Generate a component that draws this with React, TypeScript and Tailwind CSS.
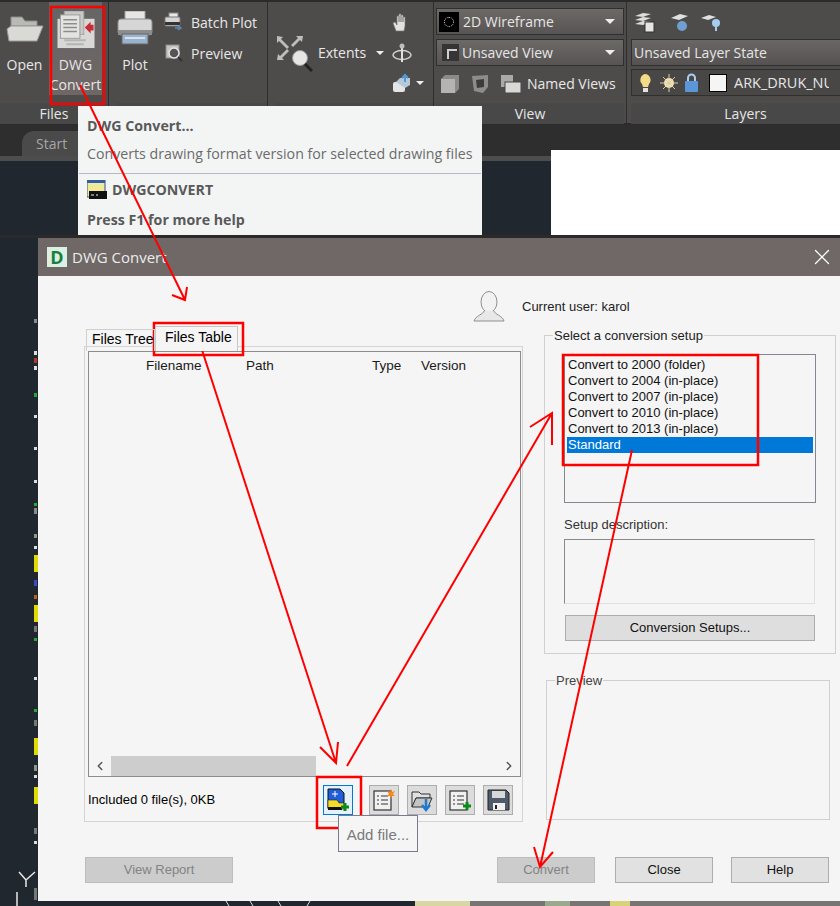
import React from "react";
import { X, ChevronLeft, ChevronRight } from "lucide-react";

const UI = "font-['Open_Sans',sans-serif]";
const WIN = "font-['Liberation_Sans',sans-serif]";

function Caret({ className = "" }: { className?: string }) {
  return <span className={"inline-block h-0 w-0 border-x-[4px] border-t-[4px] border-x-transparent border-t-[#eeeeee] " + className} />;
}

function FolderIcon() {
  return (
    <svg width="38" height="28" viewBox="0 0 38 28">
      <path d="M5 2h11l3 4h12v5H5z" fill="#b9b9b6" stroke="#8a8a88" />
      <path d="M5 11h32l-6 15H3L1 14z" fill="#d9d9d6" stroke="#9a9a98" />
    </svg>
  );
}

function ConvertIcon() {
  return (
    <svg width="42" height="40" viewBox="0 0 42 40">
      <rect x="2" y="8" width="38" height="30" fill="#d8d8d6" />
      <rect x="9" y="0" width="20" height="24" fill="#c9c9c7" stroke="#a3a3a1" />
      <rect x="5" y="4" width="20" height="24" fill="#e3e3e1" stroke="#9b9b99" />
      <path d="M8 9h14M8 13h14M8 17h14M8 21h14" stroke="#8d8d8b" strokeWidth="1.5" />
      <path d="M9 30h22M11 34h18" stroke="#b5b5b3" strokeWidth="2" />
      <path d="M30 17l6-6v3h3v6h-3v3z" fill="#cc2a38" />
    </svg>
  );
}

function PrinterIcon() {
  return (
    <svg width="36" height="34" viewBox="0 0 36 34">
      <rect x="8" y="0" width="20" height="9" fill="#e6e6e6" stroke="#a0a0a0" />
      <rect x="1" y="8" width="34" height="16" rx="3" fill="#d6d6d6" stroke="#8c8c8c" />
      <rect x="1" y="19" width="34" height="5" fill="#8d8d8d" />
      <rect x="5" y="23" width="26" height="10" fill="#9ab3cc" stroke="#666" />
      <path d="M8 27h20" stroke="#d5e2ee" strokeWidth="2" />
    </svg>
  );
}

function SmallPrinter() {
  return (
    <svg width="20" height="20" viewBox="0 0 20 20">
      <rect x="5" y="1" width="9" height="5" fill="#e8e8e8" stroke="#888" />
      <rect x="1" y="5" width="15" height="9" rx="1" fill="#d5d5d5" stroke="#777" />
      <rect x="1" y="10" width="15" height="3" fill="#333" />
      <path d="M11 16h6M14 14l3 2-3 2" stroke="#5b86b8" strokeWidth="1.5" fill="none" />
    </svg>
  );
}

function PreviewIcon() {
  return (
    <svg width="20" height="20" viewBox="0 0 20 20">
      <rect x="2" y="2" width="13" height="13" fill="#c5c5c5" stroke="#8c8c8c" />
      <circle cx="10" cy="10" r="5" fill="#555" stroke="#e5e5e5" strokeWidth="1.5" />
      <path d="M14 14l4 4" stroke="#333" strokeWidth="2" />
    </svg>
  );
}

function ExtentsIcon() {
  return (
    <svg width="38" height="38" viewBox="0 0 38 38">
      <path d="M2 2l6 1-2 2 8 8-2 2-8-8-2 2zM28 2l-1 6-2-2-7 7-2-2 7-7-2-2zM2 26l1-6 2 2 7-7 2 2-7 7 2 2z" fill="#bdbdbb" />
      <circle cx="25" cy="24" r="7.5" fill="#e6e6e6" stroke="#9a9a9a" />
      <path d="M30 30l7 7" stroke="#222" strokeWidth="3" />
    </svg>
  );
}

function HandIcon() {
  return (
    <svg width="18" height="20" viewBox="0 0 18 20">
      <path d="M4 18L1 10l2-1 2 3V3h2v6V1h2v8V2h2v7V4h2v9l-1 5z" fill="#e2e2e2" stroke="#777" strokeWidth=".7" />
    </svg>
  );
}

function OrbitIcon() {
  return (
    <svg width="20" height="20" viewBox="0 0 20 20">
      <ellipse cx="10" cy="12" rx="9" ry="4.5" fill="none" stroke="#d0d0d0" strokeWidth="1.5" />
      <path d="M10 1v18" stroke="#e0e0e0" strokeWidth="2" />
      <circle cx="10" cy="3" r="2.5" fill="#bdbdbd" />
    </svg>
  );
}

function CubeIcon() {
  return (
    <svg width="20" height="20" viewBox="0 0 20 20">
      <rect x="1" y="9" width="12" height="10" rx="2" fill="#e5e5e5" />
      <path d="M4 9l4-4h10v7l-5 3" fill="#b7c8d8" />
      <path d="M13 9V3M10 5l3-3 3 3" stroke="#4f9ad6" strokeWidth="2" fill="none" />
    </svg>
  );
}

function Combo({ children, caret = true }: { children: React.ReactNode; caret?: boolean }) {
  return (
    <div className="flex h-[27px] items-center border border-[#2f2f2f] bg-gradient-to-b from-[#6d6967] to-[#575453] pl-[2px] pr-[8px] text-[14px] text-[#e6e6e6]">
      {children}
      {caret && <Caret className="ml-auto border-x-[5px] border-t-[5px]" />}
    </div>
  );
}

function Panel({ width, label, children }: { width: string; label: string; children: React.ReactNode }) {
  return (
    <div className={"flex h-full shrink-0 flex-col border-r border-[#2e2e2e] " + width}>
      <div className="h-[101px] shrink-0">{children}</div>
      <div className="flex flex-1 items-center justify-center bg-[#484848] text-[14px] text-[#e6e6e6]">{label}</div>
    </div>
  );
}

function Ribbon() {
  return (
    <div className={"flex h-[125px] border-y-2 border-y-[#2b2b2b] bg-[#4e4c4b] text-[#e8e8e8] " + UI}>
      <Panel width="w-[109px]" label="Files">
        <div className="flex h-full">
          <div className="flex w-[49px] flex-col items-center pt-[13px] text-[14px]">
            <FolderIcon />
            <span className="mt-[11px]">Open</span>
          </div>
          <div className="flex h-[93px] w-[53px] flex-col items-center bg-gradient-to-b from-[#656565] to-[#6f6765] pt-[9px] text-[14px] leading-[20px]">
            <ConvertIcon />
            <span className="mt-[5px]">DWG</span>
            <span>Convert</span>
          </div>
        </div>
      </Panel>
      <Panel width="w-[159px] pl-[8px]" label="">
        <div className="flex h-full">
          <div className="flex w-[36px] flex-col items-center pt-[9px] text-[14px]">
            <PrinterIcon />
            <span className="mt-[9px]">Plot</span>
          </div>
          <div className="ml-[11px] flex flex-col gap-[11px] pt-[10px] text-[14px]">
            <div className="flex h-[20px] items-center gap-[7px]">
              <SmallPrinter />
              <span>Batch Plot</span>
            </div>
            <div className="flex h-[20px] items-center gap-[7px]">
              <PreviewIcon />
              <span>Preview</span>
            </div>
          </div>
        </div>
      </Panel>
      <Panel width="w-[166px] pl-[7px]" label="">
        <div className="flex h-full items-center">
          <ExtentsIcon />
          <span className="ml-[5px] text-[14px]">Extents</span>
          <Caret className="ml-[10px]" />
          <div className="ml-[8px] flex flex-col items-start gap-[10px]">
            <HandIcon />
            <OrbitIcon />
            <CubeIcon />
          </div>
          <Caret className="ml-[4px] mt-[60px]" />
        </div>
      </Panel>
      <Panel width="w-[193px] px-[2px]" label="View">
        <div className="flex flex-col gap-[4px] pt-[6px]">
          <Combo>
            <span className="relative mr-[4px] h-[20px] w-[20px] bg-black">
              <span className="absolute left-[5px] top-[5px] h-[10px] w-[10px] rounded-full border border-dotted border-[#dddddd]" />
            </span>
            2D Wireframe
          </Combo>
          <Combo>
            <span className="mr-[3px] ml-[3px] flex h-[17px] w-[17px] items-end justify-end bg-[#353535] p-[2px]">
              <span className="h-[10px] w-[10px] border-l-2 border-t-2 border-[#cfcfcf]" />
            </span>
            Unsaved View
          </Combo>
          <div className="flex h-[27px] items-center pl-[3px] text-[14px]">
            <svg width="82" height="22" viewBox="0 0 82 22">
              <path d="M2 6l4-4h14v14l-4 4H2z" fill="#8a8a88" />
              <rect x="2" y="6" width="14" height="14" fill="#b4b4b2" />
              <path d="M33 3l16-1v12l-5 6-9-2z" fill="#8c8c8a" />
              <path d="M37 7l8-1v8l-7 1z" fill="#3c3c3c" />
              <rect x="62" y="2" width="12" height="12" fill="#a9a9a7" />
              <rect x="66" y="9" width="16" height="11" fill="#d8d8d6" stroke="#444" />
            </svg>
            <span className="ml-[6px]">Named Views</span>
          </div>
        </div>
      </Panel>
      <Panel width="w-[234px] pl-[4px]" label="Layers">
        <div className="flex flex-col pt-[6px]">
          <div className="flex h-[27px] items-center gap-[17px] pl-[4px]">
            <svg width="90" height="22" viewBox="0 0 90 22">
              <path d="M0 5l8-3 8 1-8 3zM0 9l8-3 8 1-8 3zM0 13l8-3 8 1-8 3z" fill="#dddddd" />
              <rect x="10" y="11" width="9" height="10" fill="#e5e5e5" stroke="#333" />
              <path d="M36 7l9-4 8 2-9 4z" fill="#e0e0e0" />
              <circle cx="47" cy="15" r="5" fill="#6f9fd0" />
              <path d="M66 7l8-3 7 2-8 3z" fill="#e0e0e0" />
              <circle cx="81" cy="12" r="4" fill="#a5cdf0" />
              <path d="M81 16v4" stroke="#a5cdf0" strokeWidth="2" />
            </svg>
          </div>
          <div className="mt-[4px] flex h-[27px] items-center border border-[#2f2f2f] bg-gradient-to-b from-[#6a6665] to-[#555251] pl-[2px] text-[14px] text-[#e6e6e6]">
            Unsaved Layer State
          </div>
          <div className="mt-[3px] flex h-[27px] items-center overflow-hidden border border-[#2f2f2f] bg-[#484746] pl-[6px] text-[14.5px] text-[#e6e6e6]">
            <svg width="62" height="20" viewBox="0 0 62 20" className="shrink-0">
              <path d="M7 1a6 6 0 0 1 4 10l-1 3H5l-1-3A6 6 0 0 1 7 1z" fill="#f3dc85" />
              <rect x="5" y="15" width="5" height="4" fill="#e4e4e4" />
              <circle cx="31" cy="10" r="5" fill="#f4e6b5" />
              <path d="M31 1v18M22 10h18M25 4l12 12M37 4L25 16" stroke="#d8cfa8" strokeWidth="1" />
              <rect x="47" y="8" width="13" height="11" rx="1" fill="#5b97d8" />
              <path d="M50 8V5a3.500 3.500 0 0 1 7 0v3" fill="none" stroke="#a9cdf0" strokeWidth="2" />
            </svg>
            <span className="ml-[9px] h-[18px] w-[18px] shrink-0 border border-black bg-[#f5f5f5]" />
            <span className="ml-[7px] w-[95px] shrink-0 overflow-hidden whitespace-nowrap">ARK_DRUK_NU</span>
          </div>
        </div>
      </Panel>
    </div>
  );
}

function TabStrip() {
  return (
    <div className={"flex h-[36px] items-end border-b-[5px] border-b-[#4d4d4d] bg-[#2e2e2e] pl-[22px] " + UI}>
      <div className="flex h-[25px] w-[60px] items-center rounded-tl-[12px] bg-[#4a4a4a] pl-[14px] text-[14px] text-[#a6a6a6]">Start</div>
    </div>
  );
}

function CommandTooltip() {
  return (
    <div className={"absolute left-[78px] top-[106px] h-[129px] w-[404px] bg-[#f3f5f5] text-[#595959] " + UI}>
      <div className="px-[9px] pt-[10px] text-[14.200px] font-bold leading-[20px]">DWG Convert...</div>
      <div className="whitespace-nowrap px-[9px] pt-[8px] text-[14.200px] leading-[20px] text-[#6b6b6b]">Converts drawing format version for selected drawing files</div>
      <div className="mx-[1px] mt-[9px] border-t border-[#b5b9c2]" />
      <div className="flex items-center gap-[5px] px-[9px] pt-[6px] text-[14.200px] font-bold leading-[20px]">
        <svg width="20" height="20" viewBox="0 0 20 20">
          <rect x="0" y="0" width="18" height="17" fill="#f2e89a" stroke="#2f4f8f" />
          <rect x="0" y="0" width="18" height="3" fill="#2f5fa8" />
          <rect x="2" y="11" width="18" height="8" fill="#111" />
          <path d="M4 15h3M9 15h2" stroke="#eee" />
        </svg>
        DWGCONVERT
      </div>
      <div className="px-[9px] pt-[10px] text-[14.200px] font-bold leading-[20px]">Press F1 for more help</div>
    </div>
  );
}

function ToolButton({ active = false, children }: { active?: boolean; children: React.ReactNode }) {
  return (
    <div className={"flex h-[30px] w-[30px] items-center justify-center border " + (active ? "border-[#0078d7] bg-[#e5f1fb]" : "border-[#adadad] bg-[#dcdcdc]")}>
      {children}
    </div>
  );
}

function AddFileIcon() {
  return (
    <svg width="24" height="24" viewBox="0 0 24 24">
      <path d="M2 1h12l4 4v15H2z" fill="#1e5fd8" stroke="#111" />
      <path d="M2 12h9l2 3h5v6H2z" fill="#f5dc28" stroke="#222" strokeWidth=".6" />
      <path d="M9 3v6M6 6h6" stroke="#fff" />
      <rect x="2" y="19" width="14" height="3" fill="#111" />
      <path d="M19 15v8M15 19h8" stroke="#0a8a1a" strokeWidth="3" />
    </svg>
  );
}

function ListLines() {
  return (
    <>
      <rect x="2" y="3" width="17" height="19" fill="#f0f0f0" stroke="#333" strokeWidth="1.200" />
      <path d="M5 8h2M9 8h7M5 12h2M9 12h7M5 16h2M9 16h7" stroke="#333" strokeWidth="1.200" />
    </>
  );
}

function FilesTab() {
  return (
    <div className="relative h-[496px] w-[439px] shrink-0">
      <div className="relative z-10 ml-[2px] flex h-[25px] items-end text-[14px]">
        <div className="flex h-[22px] w-[69px] items-center border border-b-0 border-[#d0d0d0] pb-[3px] pl-[5px]">Files Tree</div>
        <div className="flex h-[25px] w-[83px] items-center border border-b-0 border-[#c8c8c8] bg-[#f5f5f5] pb-[4px] pl-[9px]">Files Table</div>
      </div>
      <div className="-mt-[5px] flex h-[476px] flex-col border border-[#d4d4d4] pl-[3px] pr-[1px] pt-[4px]">
        <div className="flex h-[427px] flex-col border border-[#8c8c8c]">
          <div className="flex h-[28px] items-center pl-[57px] text-[13.500px] text-[#1a1a1a]">
            <span className="w-[100px]">Filename</span>
            <span className="w-[126px]">Path</span>
            <span className="w-[49px]">Type</span>
            <span>Version</span>
          </div>
          <div className="mt-auto flex h-[20px] items-center px-[4px]">
            <ChevronLeft size={14} strokeWidth={2.500} className="text-[#555555]" />
            <div className="ml-[4px] h-[20px] w-[205px] bg-[#cdcdcd]" />
            <ChevronRight size={14} strokeWidth={2.500} className="ml-auto text-[#555555]" />
          </div>
        </div>
        <div className="flex h-[44px] items-center pr-[8px] pt-[1px]">
          <span>Included 0 file(s), 0KB</span>
          <div className="ml-auto flex gap-[8px]">
            <div className="mr-[8px]">
              <ToolButton active>
                <AddFileIcon />
              </ToolButton>
            </div>
            <ToolButton>
              <svg width="24" height="24" viewBox="0 0 24 24">
                <ListLines />
                <path d="M19 1l1 3 3-1-2 3 2 2-3 0-1 3-1-3-3 0 2-2-2-3 3 1z" fill="#f28a1c" />
              </svg>
            </ToolButton>
            <ToolButton>
              <svg width="24" height="24" viewBox="0 0 24 24">
                <path d="M2 4h7l2 2h9v4H6l-4 9z" fill="#e0e0e0" stroke="#333" />
                <path d="M6 10h16l-4 9H2z" fill="#c4c4c4" stroke="#333" />
                <path d="M16 11v9M12 17l4 5 4-5" stroke="#1f7ad0" strokeWidth="2.500" fill="none" />
              </svg>
            </ToolButton>
            <ToolButton>
              <svg width="24" height="24" viewBox="0 0 24 24">
                <ListLines />
                <path d="M19 14v8M15 18h8" stroke="#0a8a1a" strokeWidth="3" />
              </svg>
            </ToolButton>
            <ToolButton>
              <svg width="24" height="24" viewBox="0 0 24 24">
                <path d="M2 2h18l3 3v17H2z" fill="#4f5b6b" stroke="#222" />
                <rect x="6" y="3" width="13" height="7" fill="#d8d8d8" />
                <rect x="7" y="15" width="12" height="7" fill="#f0f0f0" />
                <rect x="9" y="17" width="2" height="4" fill="#222" />
              </svg>
            </ToolButton>
          </div>
        </div>
      </div>
      <div className="absolute left-[254px] top-[489px] z-10 flex h-[37px] w-[80px] items-center justify-center border border-[#7b7b8c] bg-[#f5f5f5] pt-[3px] text-[15px] text-[#7a7a7a]">
        Add file...
      </div>
    </div>
  );
}

const setups = [
  "Convert to 2000 (folder)",
  "Convert to 2004 (in-place)",
  "Convert to 2007 (in-place)",
  "Convert to 2010 (in-place)",
  "Convert to 2013 (in-place)",
];

function SetupColumn() {
  return (
    <div className="ml-[21px] flex w-[286px] shrink-0 flex-col">
      <fieldset className="h-[328px] border border-[#d0d0d0] px-[19px]">
        <legend className="-ml-[11px] px-[1px] text-[#222222]">Select a conversion setup</legend>
        <div className="mt-[8px] h-[149px] w-[252px] border border-[#828790] p-[2px]">
          {setups.map((s) => (
            <div key={s} className="h-[16px] pl-[1px] leading-[16px] text-[#111111]">{s}</div>
          ))}
          <div className="h-[16px] bg-[#0078d7] pl-[1px] leading-[16px] text-white">Standard</div>
        </div>
        <div className="mt-[14px] leading-[16px] text-[#333333]">Setup description:</div>
        <div className="mt-[6px] h-[65px] w-[251px] border border-[#8a8a8a] border-b-[#e0e0e0] border-r-[#e0e0e0]" />
        <button className="mt-[11px] ml-[1px] h-[26px] w-[250px] border border-[#adadad] bg-[#dedede] text-[#111111]">Conversion Setups...</button>
      </fieldset>
      <fieldset className="ml-[2px] mt-[17px] h-[149px] w-[284px] border border-[#d0d0d0]">
        <legend className="ml-[8px] px-[1px] text-[#444444]">Preview</legend>
      </fieldset>
    </div>
  );
}

function DialogButton({ width, disabled = false, children }: { width: string; disabled?: boolean; children: React.ReactNode }) {
  return (
    <button className={"h-[26px] border " + width + " " + (disabled ? "border-[#bdbdbd] bg-[#cccccc] text-[#838383]" : "border-[#adadad] bg-[#e1e1e1] text-[#111111]")}>
      {children}
    </button>
  );
}

function ConvertDialog() {
  return (
    <div className="absolute left-[38px] top-[238px] flex h-[663px] w-[802px] flex-col bg-[#f5f5f5]">
      <div className={"flex h-[38px] shrink-0 items-center bg-[#6f6866] pl-[9px] text-[15px] text-[#ececec] " + UI}>
        <span className="mr-[5px] flex h-[20px] w-[20px] items-center justify-center bg-[#dcefe2] text-[18px] font-bold leading-none text-[#17803f]">D</span>
        DWG Convert
        <X size={26} strokeWidth={1.200} className="ml-auto mr-[5px] text-white" />
      </div>
      <div className={"flex flex-1 flex-col text-[13px] " + WIN}>
        <div className="ml-[435px] mt-[15px] flex h-[32px] items-center">
          <svg width="32" height="32" viewBox="0 0 32 32">
            <ellipse cx="16" cy="11" rx="8" ry="10.500" fill="#f2f2f2" stroke="#8f8f8f" />
            <path d="M11 20c0 3-9 5-10 10h30c-1-5-10-7-10-10" fill="#e8e8e8" stroke="#8f8f8f" />
          </svg>
          <span className="ml-[17px] text-[#222222]">Current user: karol</span>
        </div>
        <div className="ml-[46px] mt-[3px] flex">
          <FilesTab />
          <SetupColumn />
        </div>
        <div className="ml-[47px] mt-[35px] flex">
          <DialogButton width="w-[148px]" disabled>View Report</DialogButton>
          <div className="ml-[264px]">
            <DialogButton width="w-[98px]" disabled>Convert</DialogButton>
          </div>
          <div className="ml-[20px]">
            <DialogButton width="w-[98px]">Close</DialogButton>
          </div>
          <div className="ml-[18px]">
            <DialogButton width="w-[98px]">Help</DialogButton>
          </div>
        </div>
      </div>
    </div>
  );
}

// bits of the drawing that stick out from behind the dialog
function CadFragments() {
  const ticks: [number, number, string][] = [
    [319, 4, "#8a8a8a"], [351, 4, "#dddddd"], [358, 5, "#b33a2a"], [366, 4, "#e0e0e0"],
    [393, 4, "#1fae2f"], [415, 3, "#dddddd"], [447, 3, "#dddddd"], [480, 3, "#dddddd"],
    [503, 3, "#1fae2f"], [508, 6, "#8a8a8a"], [534, 4, "#8a9a8a"], [546, 3, "#dddddd"],
    [580, 6, "#3a49c8"], [595, 4, "#b8651c"], [626, 6, "#777777"], [638, 3, "#1fae2f"],
    [677, 3, "#dddddd"], [709, 3, "#1fae2f"], [720, 6, "#777777"], [765, 6, "#8a9a8a"],
    [775, 3, "#dddddd"], [828, 6, "#777777"], [841, 3, "#dddddd"], [888, 12, "#777777"],
  ];
  const bars = [555, 605, 738, 787];
  return (
    <svg width="840" height="906" viewBox="0 0 840 906" className="absolute left-0 top-0">
      {ticks.map(([y, h, c]) => (
        <rect key={y} x="34" y={y} width="3" height={h} fill={c} />
      ))}
      {bars.map((y) => (
        <rect key={y} x="34" y={y} width="4" height="17" fill="#e0dc00" />
      ))}
      <path d="M19 872L26 880L35 872M26 880V887" stroke="#e8e8e8" strokeWidth="1.500" fill="none" />
      <path d="M17 892v14" stroke="#e8e8e8" strokeWidth="1.500" />
      <rect x="420" y="901" width="420" height="5" fill="#777471" />
      <rect x="415" y="901" width="55" height="5" fill="#d8d6a4" />
      <rect x="545" y="901" width="25" height="5" fill="#9aa88e" />
      <rect x="610" y="901" width="20" height="5" fill="#d8d27a" />
      <path d="M226 901l3 5M250 901l3 5M278 901l3 5M310 901l-3 5" stroke="#dddddd" />
    </svg>
  );
}

function Annotations() {
  const lines = [
    "M80 85L185 300M172 295L185 300L187 287",
    "M202 350L336 763M320 747L336 763L338 742",
    "M347 766L552 413M530 427L552 413L552 445",
    "M632 450L540 867M534 847L540 867L553 852",
  ];
  const boxes = [
    [51, 7, 53, 97],
    [154, 323, 89, 32],
    [563, 355, 195, 110],
    [317, 777, 44, 51],
  ];
  return (
    <svg width="840" height="906" viewBox="0 0 840 906" className="pointer-events-none absolute left-0 top-0">
      {boxes.map(([x, y, w, h]) => (
        <rect key={x} x={x} y={y} width={w} height={h} fill="none" stroke="#ff0000" strokeWidth="2.500" />
      ))}
      {lines.map((d) => (
        <path key={d} d={d} fill="none" stroke="#ff0000" strokeWidth="2" />
      ))}
    </svg>
  );
}

export default function App() {
  return (
    <div className="relative h-[906px] w-[840px] overflow-hidden bg-[#20272f]">
      <Ribbon />
      <TabStrip />
      <CadFragments />
      <div className="absolute left-[551px] top-[150px] h-[85px] w-[289px] bg-white" />
      <div className="absolute left-0 top-[235px] h-[3px] w-[840px] bg-[#2a2a2a]" />
      <CommandTooltip />
      <ConvertDialog />
      <Annotations />
    </div>
  );
}
